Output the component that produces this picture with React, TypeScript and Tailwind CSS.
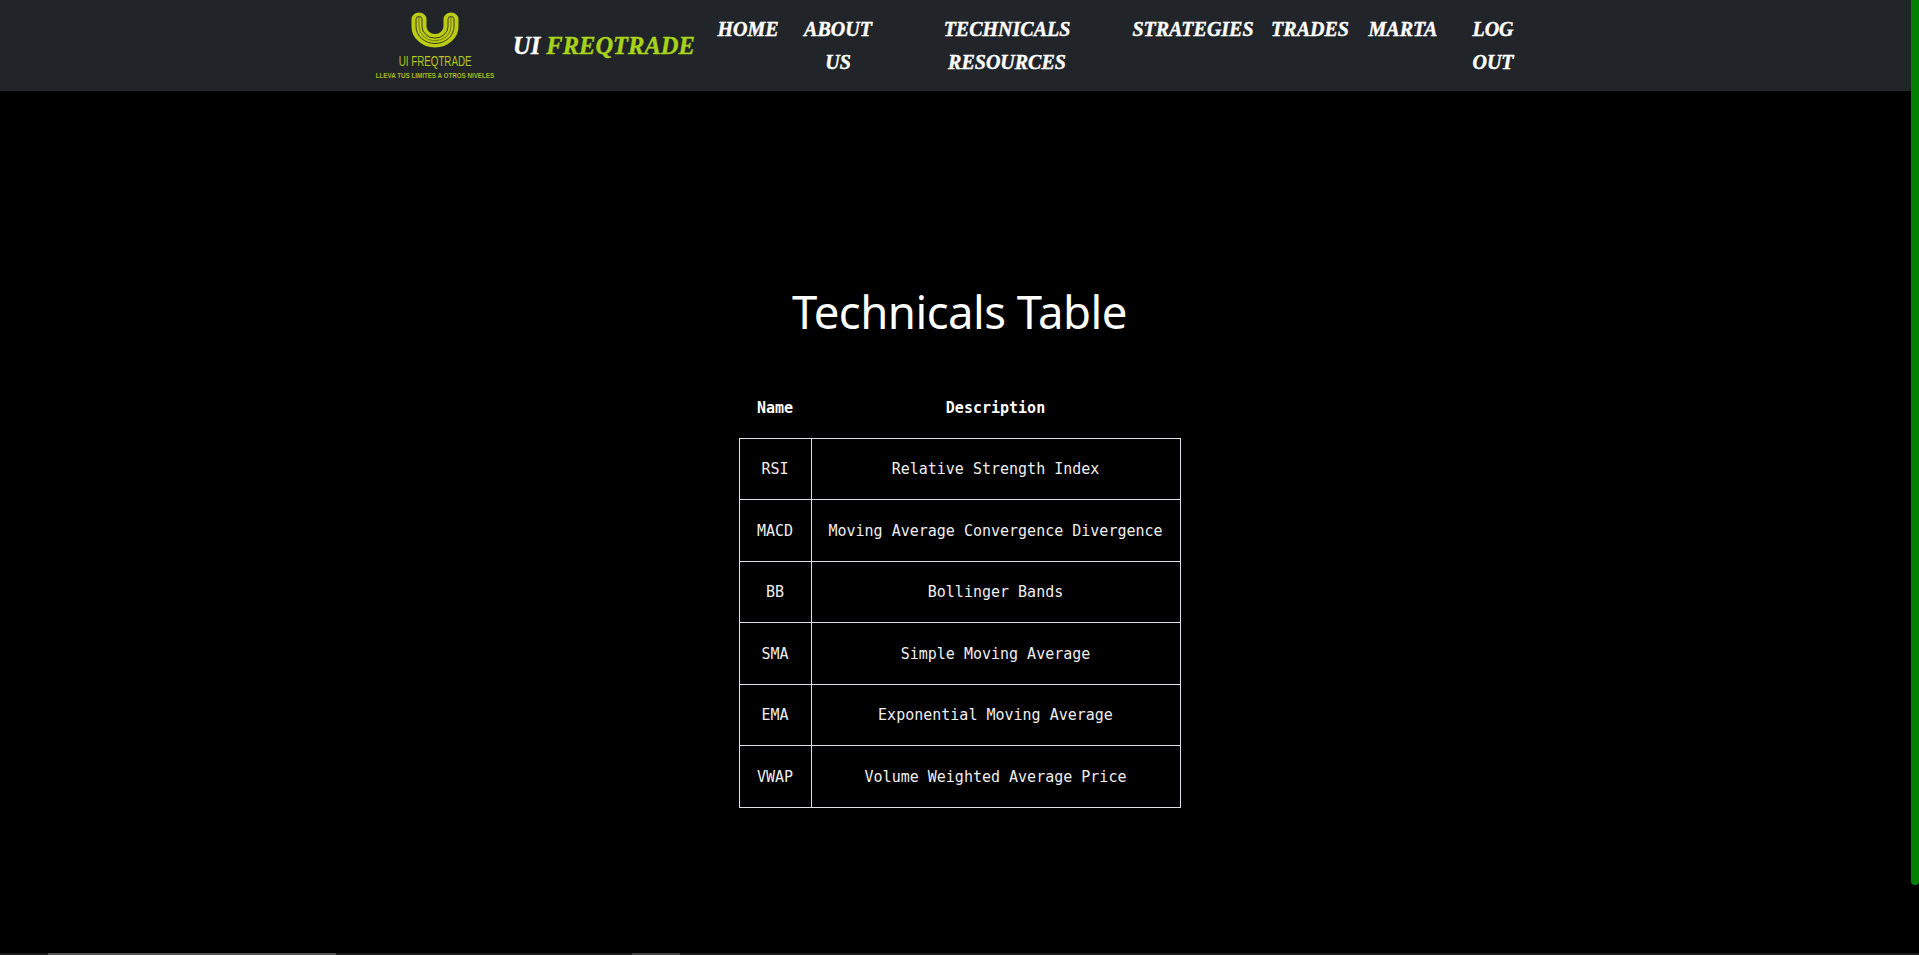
const links = [
  { lines: ["HOME"], className: "w-[70px] ml-[18px]" },
  { lines: ["ABOUT", "US"], className: "w-[90px] ml-[10px]" },
  { lines: ["TECHNICALS", "RESOURCES"], className: "w-[160px] ml-[44px]" },
  { lines: ["STRATEGIES"], className: "w-[130px] ml-[41px]" },
  { lines: ["TRADES"], className: "w-[90px] ml-[7px]" },
  { lines: ["MARTA"], className: "w-[80px] ml-[8px]" },
  { lines: ["LOG", "OUT"], className: "w-[60px] ml-[20px]" },
];

const technicals = [
  ["RSI", "Relative Strength Index"],
  ["MACD", "Moving Average Convergence Divergence"],
  ["BB", "Bollinger Bands"],
  ["SMA", "Simple Moving Average"],
  ["EMA", "Exponential Moving Average"],
  ["VWAP", "Volume Weighted Average Price"],
];

function Logo() {
  return (
    <div className="w-[120px] flex flex-col items-center not-italic font-normal">
      <svg width="48" height="36" viewBox="0 0 48 40" preserveAspectRatio="none" fill="none">
        <path d="M8 8 V16 A16 16 0 0 0 40 16 V8" stroke="#bccc14" strokeWidth="15" strokeLinecap="round" />
        <path
          d="M5 8 V16 A19 19 0 0 0 43 16 V8 A3 3 0 0 0 37 8 V16 A13 13 0 0 1 11 16 V8 A3 3 0 0 0 5 8 Z"
          stroke="#33371f"
          strokeWidth="1"
        />
        <path d="M8 5 V16 A16 16 0 0 0 40 16 V5" stroke="#5c6319" strokeWidth="0.8" />
      </svg>
      <span className="mt-[6px] font-['Liberation_Sans'] text-[14px] leading-[14px] text-[#b4c51c] [transform:scaleX(0.7)] whitespace-nowrap">UI FREQTRADE</span>
      <span className="mt-[3px] font-['Liberation_Sans'] font-bold text-[8px] leading-[9px] text-[#a9b81c] [transform:scaleX(0.78)] whitespace-nowrap">LLEVA TUS LIMITES A OTROS NIVELES</span>
    </div>
  );
}

export default function App() {
  return (
    <div className="relative h-[955px] overflow-hidden bg-black text-white">
      {/* Navbar */}
      <nav className="h-[91px] bg-[#212529] flex items-start pl-[375px] font-['Liberation_Serif'] font-bold italic">
        <div className="pt-[12px]">
          <Logo />
        </div>
        <a className="ml-[18px] mt-[28px] w-[182px] text-[24.5px] leading-[36px] whitespace-nowrap [-webkit-text-stroke:0.4px]">
          UI <span className="text-[#a8d31a]">FREQTRADE</span>
        </a>
        {links.map((link) => (
          <a key={link.lines[0]} className={`${link.className} pt-[13px] text-center text-[20px] leading-[33px] whitespace-nowrap [-webkit-text-stroke:0.4px]`}>
            {link.lines.map((line) => (
              <div key={line}>{line}</div>
            ))}
          </a>
        ))}
      </nav>

      {/* Content */}
      <main className="flex flex-col items-center pt-[190px]">
        <h1 className="font-['Noto_Sans'] text-[45.5px] leading-[60px] font-normal tracking-[-0.5px]">Technicals Table</h1>
        <table className="mt-[35px] w-[442px] border-collapse font-['DejaVu_Sans_Mono'] text-[15px] text-center">
          <thead>
            <tr className="h-[62px]">
              <th className="w-[72px] pt-[2px] font-bold">Name</th>
              <th className="pt-[2px] font-bold">Description</th>
            </tr>
          </thead>
          <tbody className="text-[#eeeeee]">
            {technicals.map(([name, description]) => (
              <tr key={name} className="h-[61.5px]">
                <td className="border border-[#dee2e6] pt-[1px]">{name}</td>
                <td className="border border-[#dee2e6] px-4 pt-[1px] whitespace-nowrap">{description}</td>
              </tr>
            ))}
          </tbody>
        </table>
      </main>

      {/* Scrollbars */}
      <div className="absolute top-0 right-0 w-[8px] h-[885px] bg-[#008000] rounded-b-[4px]" />
      <div className="absolute bottom-0 left-0 right-0 h-[2px] bg-[#1c1c1c]" />
      <div className="absolute bottom-0 left-[48px] w-[288px] h-[2px] bg-[#555555]" />
      <div className="absolute bottom-0 left-[632px] w-[48px] h-[2px] bg-[#444444]" />
    </div>
  );
}
